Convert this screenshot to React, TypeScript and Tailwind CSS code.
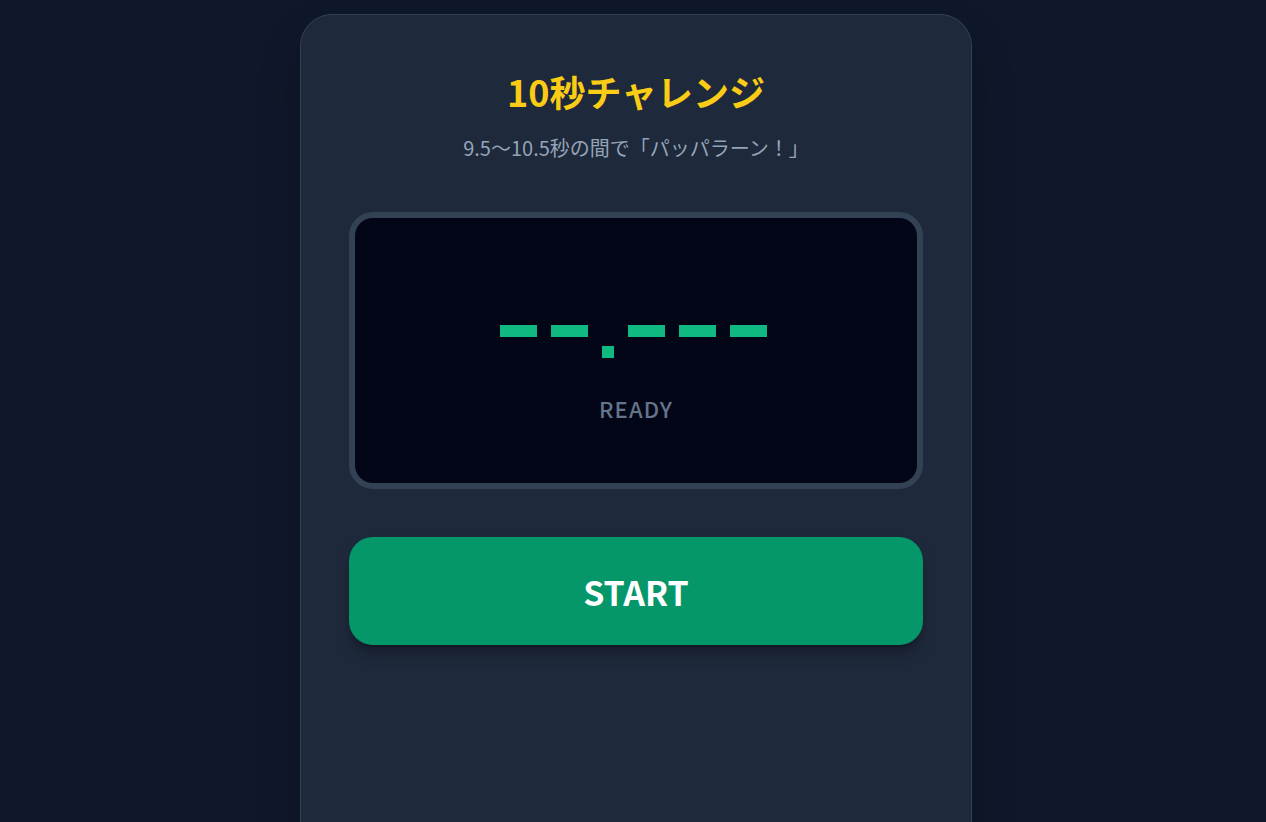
import { useState } from "react";

function Digits({ text }: { text: string }) {
  return (
    <div className="flex items-start gap-[14px] h-[33px] pr-[5px]" aria-label={text}>
      {text.split("").map((ch, i) =>
        ch === "." ? (
          <span key={i} className="mt-[21px] block w-[12px] h-[12px] bg-[#10b981]" />
        ) : (
          <span key={i} className="block w-[37px] h-[12px] bg-[#10b981]" />
        )
      )}
    </div>
  );
}

export default function App() {
  const [running, setRunning] = useState(false);

  return (
    <div
      className="min-h-screen bg-[#0f172a] flex justify-center pt-[14px] pl-[6px] overflow-hidden"
      style={{ fontFamily: '"Noto Sans CJK JP", "Noto Sans", sans-serif' }}
    >
      <div className="w-[672px] h-[900px] shrink-0 bg-[#1e293b] border border-[#334155] rounded-[32px] shadow-2xl shadow-black/40 px-12 pt-[56px]">
        <h1 className="text-center text-4xl leading-10 font-bold text-[#facc15]">10秒チャレンジ</h1>
        <p className="mt-[23px] text-center text-xl text-[#94a3b8]">9.5〜10.5秒の間で「パッパラーン！」</p>

        <div className="mt-[50px] h-[277px] rounded-3xl border-[6px] border-[#334155] bg-[#020617] flex flex-col items-center pt-[107px]">
          <Digits text="--.---" />
          <div className="mt-[34px] text-[22px] font-medium tracking-wider text-[#64748b]">
            {running ? "RUNNING" : "READY"}
          </div>
        </div>

        <button
          onClick={() => setRunning(!running)}
          className="mt-12 w-full h-[108px] rounded-3xl bg-[#059669] text-white text-[34px] font-bold shadow-lg shadow-black/30"
        >
          START
        </button>
      </div>
    </div>
  );
}
